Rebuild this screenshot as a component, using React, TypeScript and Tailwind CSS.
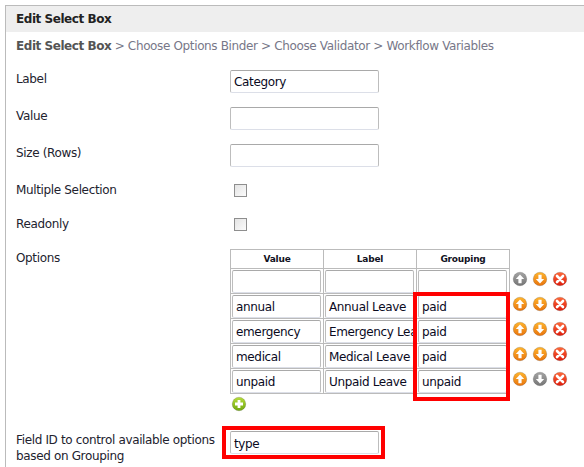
const font = { fontFamily: '"DejaVu Sans", Tahoma, sans-serif' }

type IconKind = 'up' | 'down' | 'del' | 'add'

function RoundIcon({ kind, disabled }: { kind: IconKind; disabled?: boolean }) {
  const id = disabled ? 'grey' : kind === 'del' ? 'red' : kind === 'add' ? 'green' : 'orange'
  return (
    <svg width="16" height="16" viewBox="0 0 16 16" className="block shrink-0">
      <defs>
        <linearGradient id="grey" x1="0" y1="0" x2="0" y2="1">
          <stop offset="0" stopColor="#a4a4a4" />
          <stop offset="1" stopColor="#757575" />
        </linearGradient>
        <linearGradient id="orange" x1="0" y1="0" x2="0" y2="1">
          <stop offset="0" stopColor="#ffb52e" />
          <stop offset="1" stopColor="#e8730c" />
        </linearGradient>
        <linearGradient id="red" x1="0" y1="0" x2="0" y2="1">
          <stop offset="0" stopColor="#ff6a3a" />
          <stop offset="1" stopColor="#dd1c0c" />
        </linearGradient>
        <linearGradient id="green" x1="0" y1="0" x2="0" y2="1">
          <stop offset="0" stopColor="#b5dc3c" />
          <stop offset="1" stopColor="#71a80e" />
        </linearGradient>
      </defs>
      <circle cx="8" cy="8" r="6.8" fill={`url(#${id})`} stroke="#000" strokeOpacity="0.15" />
      {kind === 'up' && <path d="M8 3.4 12.2 8H9.6v4.2H6.4V8H3.8z" fill="#fff" />}
      {kind === 'down' && <path d="M8 12.6 12.2 8H9.6V3.8H6.4V8H3.8z" fill="#fff" />}
      {kind === 'del' && <path d="M5 5l6 6M11 5l-6 6" stroke="#fff" strokeWidth="2.6" strokeLinecap="round" />}
      {kind === 'add' && <path d="M8 4v8M4 8h8" stroke="#fff" strokeWidth="2.8" />}
    </svg>
  )
}

function TextBox({ value, className }: { value?: string; className: string }) {
  return (
    <div
      className={`h-[23px] border border-[#bdbdbd] border-t-[#a9a9a9] border-b-[#dcdfe8] rounded-[2px] bg-white pl-[3px] text-[12px] tracking-[-0.35px] text-[#0a0a1e] overflow-hidden whitespace-nowrap ${className}`}
    >
      {value}
    </div>
  )
}

function Row({ label, value, className }: { label: string; value?: string; className: string }) {
  return (
    <div className={`flex ${className}`}>
      <div className="w-[214px] pt-[1px] text-[12px] tracking-[-0.35px] leading-[16px] text-[#22222e]">{label}</div>
      <TextBox value={value} className="w-[149px] leading-[22px]" />
    </div>
  )
}

function CheckRow({ label, className }: { label: string; className: string }) {
  return (
    <div className={`flex ${className}`}>
      <div className="w-[214px] text-[12px] tracking-[-0.35px] leading-[16px] text-[#22222e]">{label}</div>
      <div className="ml-[4px] mt-[2px] w-[13px] h-[13px] border border-[#8e8e8e] bg-gradient-to-br from-[#e4e4e4] to-[#fbfbfb]" />
    </div>
  )
}

const options = [
  { value: '', label: '', grouping: '', up: false, down: true },
  { value: 'annual', label: 'Annual Leave', grouping: 'paid', up: true, down: true },
  { value: 'emergency', label: 'Emergency Leave', grouping: 'paid', up: true, down: true },
  { value: 'medical', label: 'Medical Leave', grouping: 'paid', up: true, down: true },
  { value: 'unpaid', label: 'Unpaid Leave', grouping: 'unpaid', up: true, down: false }
]

export default function App() {
  return (
    <div className="h-[467px] w-[584px] overflow-hidden bg-white pt-[5px] pl-[5px]" style={font}>
      <div className="h-[462px] border-t border-l border-[#bbbbbb]">
        <div className="h-[26px] bg-[#eeeeee] pl-[10px] text-[12px] font-bold tracking-[-0.45px] leading-[27px] text-[#222222]">
          Edit Select Box
        </div>
        <div className="pl-[10px] mt-[4px] h-[20px] text-[12px] tracking-[-0.36px] leading-[20px] text-[#777788] whitespace-nowrap">
          <span className="font-bold tracking-[-0.45px] text-[#555555]">Edit Select Box</span> &gt; Choose Options Binder &gt; Choose Validator &gt; Workflow Variables
        </div>

        <div className="pl-[10px]">
          <Row label="Label" value="Category" className="mt-[14px]" />
          <Row label="Value" className="mt-[14px]" />
          <Row label="Size (Rows)" className="mt-[14px]" />
          <CheckRow label="Multiple Selection" className="mt-[15px]" />
          <CheckRow label="Readonly" className="mt-[18px]" />

          <div className="flex mt-[18px]">
            <div className="w-[214px] text-[12px] tracking-[-0.35px] leading-[16px] text-[#22222e]">Options</div>
            <div>
              <div className="relative -mt-[1px]">
                <table className="border-collapse table-fixed w-[280px]">
                  <thead>
                    <tr className="h-[19px]">
                      <th className="w-[93px] border border-[#bbbbbb] p-0 text-center text-[9px] tracking-[-0.2px] font-bold leading-[18px] text-[#111122]">Value</th>
                      <th className="w-[93px] border border-[#bbbbbb] p-0 text-center text-[9px] tracking-[-0.2px] font-bold leading-[18px] text-[#111122]">Label</th>
                      <th className="w-[93px] border border-[#bbbbbb] p-0 text-center text-[9px] tracking-[-0.2px] font-bold leading-[18px] text-[#111122]">Grouping</th>
                    </tr>
                  </thead>
                  <tbody>
                    {options.map((o, i) => (
                      <tr key={i} className="h-[25px]">
                        <td className="border border-[#bbbbbb] pl-[1px] pr-[1px] py-0 align-middle"><TextBox value={o.value} className="w-[89px] leading-[22px]" /></td>
                        <td className="border border-[#bbbbbb] pl-[1px] pr-[1px] py-0 align-middle"><TextBox value={o.label} className="w-[89px] leading-[22px]" /></td>
                        <td className="border border-[#bbbbbb] pl-[1px] pr-[1px] py-0 align-middle"><TextBox value={o.grouping} className="w-[89px] leading-[22px]" /></td>
                      </tr>
                    ))}
                  </tbody>
                </table>
                <div className="absolute left-[280px] top-[17px] flex flex-col">
                  {options.map((o, i) => (
                    <div key={i} className="flex h-[25px] items-center gap-[4px] pl-[2px]">
                      <RoundIcon kind="up" disabled={!o.up} />
                      <RoundIcon kind="down" disabled={!o.down} />
                      <RoundIcon kind="del" />
                    </div>
                  ))}
                </div>
                <div className="absolute left-[183px] top-[43px] w-[97px] h-[109px] border-[4px] border-[#ff0000]" />
              </div>
              <div className="mt-[2px] ml-[1px]">
                <RoundIcon kind="add" />
              </div>
            </div>
          </div>

          <div className="flex mt-[19px]">
            <div className="w-[214px] pt-[1px] text-[12px] tracking-[-0.35px] leading-[16px] text-[#22222e]">
              Field ID to control available options based on Grouping
            </div>
            <div className="relative">
              <TextBox value="type" className="w-[149px] leading-[24px]" />
              <div className="absolute -left-[8px] -top-[5px] w-[163px] h-[33px] border-[4px] border-[#ff0000]" />
            </div>
          </div>
        </div>
      </div>
    </div>
  )
}
